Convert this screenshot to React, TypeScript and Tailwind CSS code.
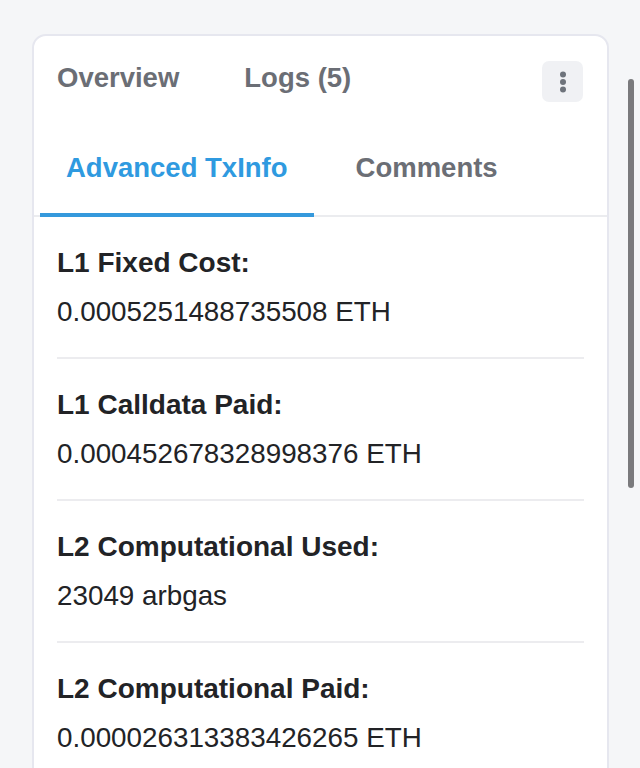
import React from 'react'

const rows = [
  { label: 'L1 Fixed Cost:', value: '0.0005251488735508 ETH' },
  { label: 'L1 Calldata Paid:', value: '0.000452678328998376 ETH' },
  { label: 'L2 Computational Used:', value: '23049 arbgas' },
  { label: 'L2 Computational Paid:', value: '0.000026313383426265 ETH' },
]

function KebabButton() {
  return (
    <button className="w-[41px] h-[41px] rounded-[7px] bg-[#f0f1f4] flex items-center justify-center">
      <svg width="8" height="24" viewBox="0 0 8 24" fill="#6e737b">
        <circle cx="4" cy="4.5" r="3" />
        <circle cx="4" cy="12" r="3" />
        <circle cx="4" cy="19.5" r="3" />
      </svg>
    </button>
  )
}

export default function App() {
  const [tab, setTab] = React.useState('advanced')

  return (
    <main
      className="relative h-[768px] overflow-hidden bg-[#f5f6f8] pt-[34px] pl-[32px] pr-[31px]"
      style={{ fontFamily: '"Liberation Sans", Arial, sans-serif' }}
    >
      <div className="rounded-[14px] border-2 border-[#e6e7ef] bg-white min-h-[800px]">
        {/* top tab row */}
        <div className="flex items-start justify-between pt-[25px] pl-[23px] pr-[24px]">
          <div className="flex gap-[65px] text-[27.5px] leading-[34px] font-bold text-[#6b6e75]">
            <button onClick={() => setTab('overview')}>Overview</button>
            <button onClick={() => setTab('logs')}>Logs (5)</button>
          </div>
          <KebabButton />
        </div>

        {/* second tab row */}
        <div className="mt-[49px] border-b-2 border-[#ebecef]">
          <div className="ml-[6px] flex gap-[16px] text-[27.5px] leading-[34px] font-bold">
            <button
              onClick={() => setTab('advanced')}
              className={
                tab === 'advanced'
                  ? 'px-[26px] pb-[28px] border-b-4 border-[#3599dc] text-[#2f9ae0] -mb-[2px]'
                  : 'px-[26px] pb-[28px] border-b-4 border-transparent text-[#6b6e75] -mb-[2px]'
              }
            >
              Advanced TxInfo
            </button>
            <button
              onClick={() => setTab('comments')}
              className={
                tab === 'comments'
                  ? 'px-[26px] pb-[28px] border-b-4 border-[#3599dc] text-[#2f9ae0] -mb-[2px]'
                  : 'px-[26px] pb-[28px] border-b-4 border-transparent text-[#6b6e75] -mb-[2px]'
              }
            >
              Comments
            </button>
          </div>
        </div>

        {/* fee breakdown */}
        <div className="px-[23px]">
          {rows.map((r) => (
            <div key={r.label} className="pt-[29px] pb-[28px] border-b-2 border-[#ececef] text-[#222326]">
              <div className="text-[28px] leading-[34px] font-bold">{r.label}</div>
              <div className="mt-[15px] text-[27.8px] leading-[34px]">{r.value}</div>
            </div>
          ))}
        </div>
      </div>

      {/* overlay scrollbar */}
      <div className="absolute left-[628px] top-[79px] w-[6px] h-[409px] rounded-full bg-[#7a7a7d]" />
    </main>
  )
}
